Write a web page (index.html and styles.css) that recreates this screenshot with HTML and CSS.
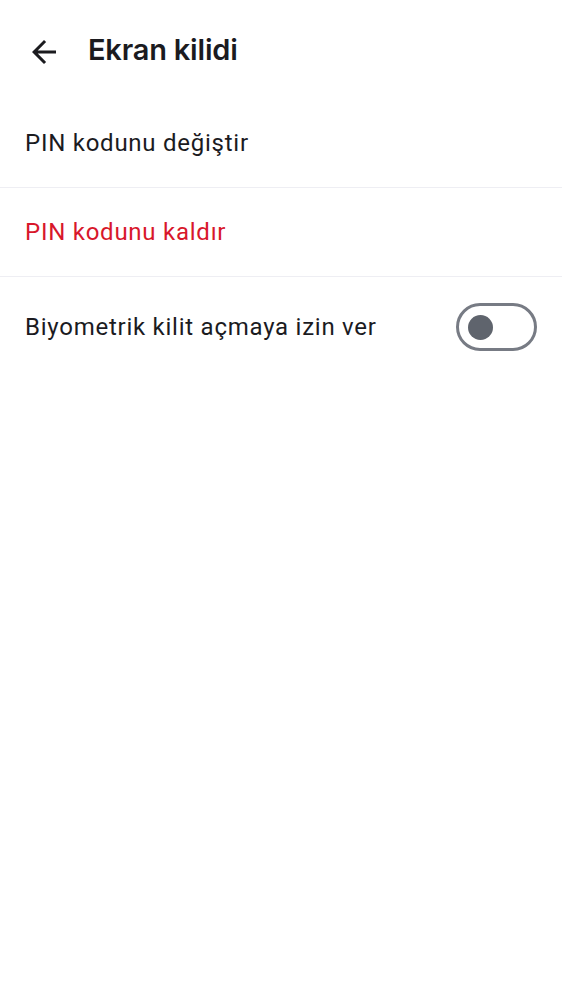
FILE: index.html
```html
<!DOCTYPE html>
<html lang="tr">
<head>
<meta charset="utf-8">
<link rel="stylesheet" href="styles.css">
</head>
<body>
<div class="screen">
  <header class="topbar">
    <button class="back" aria-label="Geri">
      <svg viewBox="0 0 24 24" width="36" height="36"><path d="M20 11H7.83l5.59-5.59L12 4l-8 8 8 8 1.41-1.41L7.83 13H20v-2z" fill="#1b1b1f"/></svg>
    </button>
    <h1 class="title">Ekran kilidi</h1>
  </header>
  <ul class="list">
    <li class="row">PIN kodunu değiştir</li>
    <li class="row danger">PIN kodunu kaldır</li>
    <li class="row toggle-row">
      <span>Biyometrik kilit açmaya izin ver</span>
      <span class="switch"><span class="thumb"></span></span>
    </li>
  </ul>
</div>
</body>
</html>
```
FILE: styles.css
```css
html, body {
  margin: 0;
  padding: 0;
  background: #ffffff;
}
body {
  font-family: Roboto, "Noto Sans", sans-serif;
  color: #1b1b1f;
}
.screen {
  width: 562px;
}
.topbar {
  height: 99px;
  display: flex;
  align-items: center;
  padding-left: 26px;
  box-sizing: border-box;
}
.back {
  width: 36px;
  height: 36px;
  padding: 0;
  margin: 0;
  border: 0;
  background: none;
  display: flex;
  margin-top: 4px;
}
.title {
  margin: 0 0 0 26px;
  font-family: Inter, Roboto, sans-serif;
  font-weight: 600;
  font-size: 29px;
  letter-spacing: -0.2px;
  color: #1b1b1f;
}
.list {
  list-style: none;
  margin: 0;
  padding: 0;
}
.row {
  height: 88px;
  display: flex;
  align-items: center;
  padding: 0 25px;
  font-size: 24px;
  letter-spacing: 0.75px;
  border-bottom: 1px solid #eeeef3;
}
.danger {
  color: #d8172b;
}
.toggle-row {
  height: 100px;
  justify-content: space-between;
  border-bottom: 0;
  padding-right: 25px;
}
.switch {
  width: 81px;
  height: 48px;
  box-sizing: border-box;
  border: 3px solid #777b84;
  border-radius: 24px;
  display: flex;
  align-items: center;
  padding-left: 9px;
}
.thumb {
  width: 25px;
  height: 25px;
  border-radius: 50%;
  background: #5f646d;
}
```
